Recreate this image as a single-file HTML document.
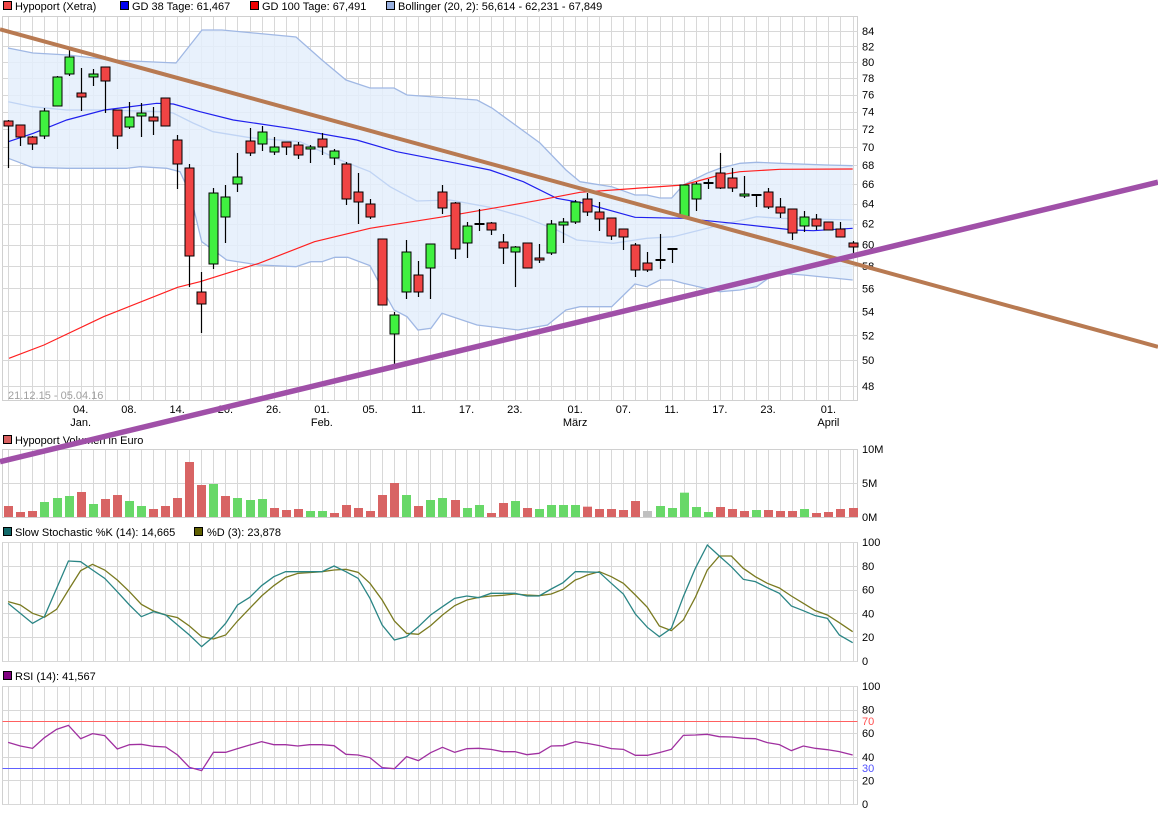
<!DOCTYPE html>
<html><head><meta charset="utf-8"><style>
html,body{margin:0;padding:0;background:#fff;width:1158px;height:814px;overflow:hidden}
svg{display:block;font-family:"Liberation Sans",sans-serif;font-size:11px}
</style></head><body>
<svg id="s" width="1158" height="814" viewBox="0 0 1158 814" xmlns="http://www.w3.org/2000/svg">
<g id="grid"></g>
<g id="main"></g>
<!-- legends -->
<g stroke="#000" stroke-width="1">
<rect x="3.5" y="1.5" width="8" height="8" fill="#ef4545"/>
<rect x="120.5" y="1.5" width="8" height="8" fill="#0000ee"/>
<rect x="250.5" y="1.5" width="8" height="8" fill="#ee0000"/>
<rect x="386.5" y="1.5" width="8" height="8" fill="#98b0e0"/>
<rect x="3.5" y="435.5" width="8" height="8" fill="#d86060"/>
<rect x="3.5" y="527.5" width="8" height="8" fill="#106868"/>
<rect x="194.5" y="527.5" width="8" height="8" fill="#606000"/>
<rect x="3.5" y="671.5" width="8" height="8" fill="#800080"/>
</g>
<g fill="#000">
<text x="15" y="10">Hypoport (Xetra)</text>
<text x="132" y="10">GD 38 Tage: 61,467</text>
<text x="262" y="10">GD 100 Tage: 67,491</text>
<text x="398" y="10">Bollinger (20, 2): 56,614 - 62,231 - 67,849</text>
<text x="15" y="444">Hypoport Volumen in Euro</text>
<text x="15" y="536">Slow Stochastic %K (14): 14,665</text>
<text x="207" y="536">%D (3): 23,878</text>
<text x="15" y="680">RSI (14): 41,567</text>
</g>
<text x="8" y="399" fill="#a0a0a0">21.12.15 - 05.04.16</text>
<g id="labels" fill="#000"></g>
<g id="top"></g>
</svg>
<script>
var NS="http://www.w3.org/2000/svg";
function el(p,t,a){var e=document.createElementNS(NS,t);for(var k in a)e.setAttribute(k,a[k]);p.appendChild(e);return e;}
var G=document.getElementById('grid'),M=document.getElementById('main'),L=document.getElementById('labels'),T=document.getElementById('top');
function X(i){return 8.3+12.06*i;}
var N=71,L0=2.5,R0=857.5;
function py(p){return 2842-634.4*Math.log(p);}
// panels
var panels=[[16,400],[449,517],[542,661],[686,804]];
panels.forEach(function(p){
 for(var i=0;i<N;i++){var x=Math.round(X(i))+0.5;el(G,'line',{x1:x,x2:x,y1:p[0],y2:p[1],stroke:'#d8d8d8'});}
 el(G,'rect',{x:L0,y:p[0]+0.5,width:R0-L0,height:p[1]-p[0],fill:'none',stroke:'#d0d0d0'});
});
for(var v=48;v<=84;v+=2){var y=py(v);el(G,'line',{x1:L0,x2:R0,y1:Math.round(y)+0.5,y2:Math.round(y)+0.5,stroke:'#d8d8d8'});
 el(L,'text',{x:862,y:y+4}).textContent=v;}
el(G,'line',{x1:L0,x2:R0,y1:483.5,y2:483.5,stroke:'#d8d8d8'});
[['10M',449],['5M',483],['0M',517]].forEach(function(a){el(L,'text',{x:862,y:a[1]+4}).textContent=a[0];});
for(var k=0;k<=5;k++){var y1=661-k*23.8,y2=804-k*23.6;
 el(G,'line',{x1:L0,x2:R0,y1:Math.round(y1)+0.5,y2:Math.round(y1)+0.5,stroke:'#d8d8d8'});
 el(G,'line',{x1:L0,x2:R0,y1:Math.round(y2)+0.5,y2:Math.round(y2)+0.5,stroke:'#d8d8d8'});
 el(L,'text',{x:862,y:y1+4}).textContent=k*20;
 el(L,'text',{x:862,y:y2+4}).textContent=k*20;}
el(G,'line',{x1:L0,x2:R0,y1:721.5,y2:721.5,stroke:'#ff6060'});
el(G,'line',{x1:L0,x2:R0,y1:768.5,y2:768.5,stroke:'#6060ff'});
el(L,'text',{x:862,y:725,fill:'#ff5050'}).textContent='70';
el(L,'text',{x:862,y:772,fill:'#5050ff'}).textContent='30';
// dates
var dts=[[6,'04.','Jan.'],[10,'08.'],[14,'14.'],[18,'20.'],[22,'26.'],[26,'01.','Feb.'],[30,'05.'],[34,'11.'],[38,'17.'],[42,'23.'],[47,'01.','März'],[51,'07.'],[55,'11.'],[59,'17.'],[63,'23.'],[68,'01.','April']];
dts.forEach(function(d){var x=X(d[0]);el(L,'text',{x:x,y:413,'text-anchor':'middle'}).textContent=d[1];
 if(d[2])el(L,'text',{x:x,y:426,'text-anchor':'middle'}).textContent=d[2];});
function pts(a){return a.map(function(p){return p[0]+','+p[1];}).join(' ');}
var up=[[8,48],[33,53],[68,55],[111,60],[176,63],[202,30],[222,30],[296,37],[322,60],[346,80],[370,88],[394,88],[407,95],[477,100],[492,108],[540,143],[566,170],[580,181.7],[611.7,186.7],[635,195],[646.7,195],[660,198],[671.7,198],[683.3,185],[706.7,173.3],[720,168.3],[740,163.3],[756.7,162.3],[780,163.3],[826.7,165],[852.7,165.7]];
var lo=[[8.3,158.3],[32.3,167.3],[66.7,168.3],[126.7,168.3],[140,166.7],[166.7,168.3],[180,171.7],[190,193.3],[201.7,241.7],[213.3,250],[226.7,260],[259,265],[296,266.7],[310.8,261.7],[321.9,261.7],[334.8,257.3],[347.8,257.3],[370,265.7],[382.9,290],[394,310],[407,316.7],[418,330],[431,328.3],[442,313.3],[477,325],[518,330],[547.5,325],[566,310],[580,306.7],[611.7,306.7],[635,284],[646.7,286.7],[660,280],[671.7,280],[683.3,283.3],[720,291.7],[740,290],[756.7,286.7],[768.3,278.3],[780,273.3],[803.3,275],[852.7,280]];
var mid=[[8.3,101.7],[32.3,106.7],[66.7,110],[104,110],[163,111.7],[173,113],[193,123],[213,131.7],[250,137.7],[300,141.7],[340,160],[370,171.7],[390,186.7],[416.7,201],[450,200],[490,207.3],[523,216.7],[556.7,230],[576.7,240],[613.3,243.3],[646.7,238.3],[673.3,236.7],[713.3,226.7],[756.7,216.7],[780,218.3],[852.7,220]];
el(M,'polygon',{points:pts(up.concat(lo.slice().reverse())),fill:'#e4eefc','fill-opacity':'0.85'});
el(M,'polyline',{points:pts(up),fill:'none',stroke:'#a0b8e4','stroke-width':1.3});
el(M,'polyline',{points:pts(lo),fill:'none',stroke:'#a0b8e4','stroke-width':1.3});
el(M,'polyline',{points:pts(mid),fill:'none',stroke:'#c0d4f4','stroke-width':1.3});
var gd38=[[8.3,141.7],[33.3,133.3],[66.7,120],[104.3,110],[156.7,103.3],[173.3,104],[200,111.7],[233.3,120],[290,128.3],[356.7,140],[396.7,151.7],[456.7,163.3],[490,170],[523.3,181.7],[556.7,198.3],[583.3,203],[635,217.3],[683.3,218.3],[733.3,223.3],[793.3,230],[813.3,230.7],[852.7,228.3]];
var gd100=[[9,358.3],[44,345],[103.6,316.7],[177.6,287.3],[200,281.7],[259,263.3],[314.5,241.7],[370,228.3],[444,216.7],[536.4,200.7],[580,192.3],[683.3,185],[720,175],[740,171.7],[780,169.3],[852.7,169]];
el(M,'polyline',{points:pts(gd38),fill:'none',stroke:'#2020ee','stroke-width':1.2});
el(M,'polyline',{points:pts(gd100),fill:'none',stroke:'#ff2020','stroke-width':1.2});
var C=[[120,168,121,126,'r'],[125,146,125,137,'r'],[136,150,137,144,'r'],[108,139,111,136,'g'],[76,106,77,106,'g'],[49,76,57,74,'g'],[68,111,93,97,'r'],[69,86,74,77,'g'],[67,113,67,81,'r'],[110,149,110,136,'r'],
[102,129,117,127,'g'],[103,137,113,116,'g'],[107,135,117,121,'r'],[98,126,98,126,'r'],[135,189,140,164,'r'],[164,287,168,256,'r'],[272,333,292,304,'r'],[188,269,193,264,'g'],[185,243,197,217,'g'],[153,192,177,184,'g'],
[128,156,141,153,'r'],[126,151,132,144,'g'],[137,155,147,152,'g'],[142,155,142,147,'r'],[142,159,145,155,'r'],[145,163,147,149,'g'],[133,155,139,147,'r'],[149,165,151,158,'g'],[162,205,164,199,'r'],[173,224,192,202,'r'],
[199,219,204,217,'r'],[239,305,239,305,'r'],[312,366,315,334,'g'],[240,299,252,292,'g'],[261,297,275,292,'r'],[244,299,244,268,'g'],[185,214,192,208,'r'],[202,259,203,249,'r'],[222,258,226,243,'g'],[209,231,223,224,'k'],
[222,235,223,230,'r'],[234,264,242,248,'r'],[246,287,247,252,'g'],[243,268,243,268,'r'],[244,263,258,260,'r'],[220,255,224,253,'g'],[218,243,222,225,'g'],[200,224,202,222,'g'],[193,216,199,212,'r'],[202,231,212,219,'r'],
[218,240,218,236,'r'],[229,250,229,237,'r'],[243,277,245,270,'r'],[252,272,263,270,'r'],[234,269,259,260,'k'],[248,263,248,249,'k'],[185,217,185,217,'g'],[182,211,184,199,'g'],[179,189,182,183,'k'],[153,189,173,188,'r'],
[168,192,178,188,'r'],[176,198,194,196,'g'],[194,207,194,195,'k'],[188,209,192,207,'r'],[198,218,207,213,'r'],[209,240,209,233,'r'],[211,232,217,226,'g'],[214,230,219,226,'r'],[222,230,222,230,'r'],[222,237,229,237,'r'],[241,253,243,247,'r']];
C.forEach(function(c,i){var x=Math.round(X(i))+0.5;
 el(M,'line',{x1:x,x2:x,y1:c[0],y2:c[1],stroke:'#000','stroke-width':1.2});
 if(c[4]=='k'){el(M,'rect',{x:x-5,y:c[2],width:10,height:2,fill:'#000'});}
 else el(M,'rect',{x:x-4.5,y:c[2],width:9,height:Math.max(2,c[3]-c[2]),fill:c[4]=='r'?'#f04444':'#40f040',stroke:'#000','stroke-width':1});
});
// volume
var V=[[918,'r'],[936,'r'],[933,'r'],[906,'g'],[894,'g'],[888,'g'],[876,'r'],[912,'g'],[897,'r'],[885,'r'],[903,'g'],[918,'g'],[927,'r'],[918,'r'],[894,'r'],[786,'r'],[855,'r'],[852,'g'],[888,'r'],[894,'g'],[900,'g'],[897,'g'],[924,'r'],[930,'r'],[927,'r'],[933,'g'],[933,'g'],[939,'r'],[915,'r'],[924,'r'],[933,'r'],[885,'r'],[849,'r'],[885,'g'],[918,'r'],[900,'g'],[894,'g'],[900,'r'],[924,'g'],[915,'g'],[939,'r'],[909,'r'],[903,'g'],[924,'r'],[927,'g'],[915,'g'],[915,'g'],[915,'g']];
V=V.map(function(v){return [200+v[0]/3,v[1]];});
[[1040,'r'],[1047,'r'],[1047,'r'],[1050,'r'],[1023,'r'],[1053,'y'],[1038,'g'],[1044,'g'],[998,'g'],[1041,'g'],[1056,'g'],[1041,'r'],[1047,'r'],[1053,'r'],[1050,'g'],[1050,'r'],[1053,'r'],[1053,'r'],[1047,'g'],[1059,'r'],[1056,'r'],[1047,'r'],[1044,'r']].forEach(function(v){V.push([160+v[0]/3,v[1]]);});
V.forEach(function(v,i){var x=Math.round(X(i))+0.5;
 el(M,'rect',{x:x-4.5,y:v[0],width:9,height:517-v[0],fill:v[1]=='r'?'#d86464':v[1]=='g'?'#68d868':'#c0c0c0'});});
function z5(a){return a.map(function(p){return [p[0]/2.703,520+p[1]/3];});}
function z6(a){return a.map(function(p){return [580+p[0]/3,520+p[1]/3];});}
var K=z5([[22,250],[88,310],[120,290],[185,123],[218,125],[250,150],[283,175],[317,215],[350,255],[382,290],[415,275],[448,285],[480,315],[512,345],[545,380],[577,350],[610,310],[642,255],[675,232],[707,197],[740,170],[772,155],[870,155],[903,138],[935,155],[968,175],[1000,235],[1033,315],[1066,360],[1099,350],[1131,320],[1164,285],[1196,260],[1229,235],[1262,228],[1294,233],[1327,220],[1392,220],[1424,228],[1457,228],[1490,207],[1522,188],[1555,155]]).concat(z6([[0,155],[58,157],[94,190],[130,222],[166,282],[202,322],[238,350],[274,325],[310,230],[346,145],[382,75],[418,108],[454,140],[490,178],[526,185],[562,203],[598,220],[634,258],[670,272],[706,287],[742,295],[778,345],[818,368]]));
var D=z5([[22,245],[55,255],[88,280],[120,292],[153,268],[185,210],[218,152],[250,133],[283,150],[317,180],[350,215],[382,253],[415,273],[448,285],[480,293],[512,318],[545,350],[577,357],[610,345],[642,303],[675,265],[707,228],[740,197],[772,172],[805,160],[870,155],[903,150],[935,148],[968,157],[1000,190],[1033,240],[1066,303],[1099,340],[1131,343],[1164,317],[1196,285],[1229,257],[1262,240],[1294,232],[1327,228],[1359,226],[1392,222],[1424,225],[1457,227],[1490,222],[1522,208],[1555,180]]).concat(z6([[0,175],[22,165],[58,155],[94,170],[130,190],[166,225],[202,262],[238,318],[274,332],[310,300],[346,232],[382,150],[418,108],[454,108],[490,145],[526,170],[562,190],[598,204],[634,228],[670,250],[706,272],[742,285],[778,308],[818,335]]));
var R=z5([[22,667],[55,678],[88,685],[120,653],[153,628],[185,616],[218,656],[250,641],[283,647],[317,687],[350,674],[382,673],[415,679],[448,681],[480,705],[512,742],[545,752],[577,697],[610,697],[642,686],[675,675],[707,665],[740,674],[772,674],[805,678],[837,674],[870,674],[903,677],[935,703],[968,705],[1000,713],[1033,743],[1066,746],[1099,710],[1131,722],[1164,698],[1196,682],[1229,697],[1262,686],[1294,685],[1327,688],[1359,695],[1392,695],[1424,704],[1457,700],[1490,678],[1522,677],[1555,665]]).concat(z6([[0,667],[22,670],[58,677],[94,686],[130,688],[166,706],[202,706],[238,698],[274,688],[310,646],[346,645],[382,643],[418,650],[454,651],[490,655],[526,656],[562,668],[598,674],[634,692],[670,678],[706,685],[742,689],[778,695],[818,705]]));
el(M,'polyline',{points:pts(D),fill:'none',stroke:'#7a7a20','stroke-width':1.3});
el(M,'polyline',{points:pts(K),fill:'none',stroke:'#2a8585','stroke-width':1.3});
el(M,'polyline',{points:pts(R),fill:'none',stroke:'#a030a0','stroke-width':1.3});
// trend lines
el(T,'line',{x1:0,y1:29.3,x2:1158,y2:346.8,stroke:'#b87a52','stroke-width':4});
el(T,'line',{x1:0,y1:461.7,x2:1158,y2:182.2,stroke:'#a050a8','stroke-width':5.5});
</script>
</body></html>
